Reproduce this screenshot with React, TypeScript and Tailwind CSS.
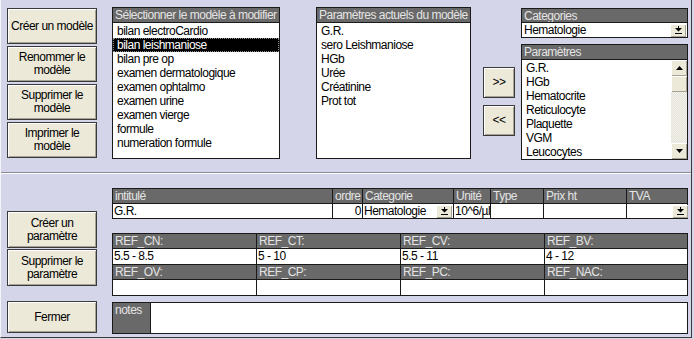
import { FC, ReactNode } from 'react';

const font = 'font-[Liberation_Sans,Arial,sans-serif] text-[12px] tracking-[-0.5px]';

const bevel = 'bg-[#ece9d8] shadow-[inset_1px_1px_0_#ffffff,inset_-1px_-1px_0_#a7a394]';

const Button: FC<{ lines: string[]; className?: string }> = ({ lines, className = '' }) => (
  <div
    className={`flex flex-col items-center justify-center border border-[#3a3a3a] ${bevel} leading-[13px] text-black ${className}`}
  >
    {lines.map((l) => (
      <span key={l} className="whitespace-nowrap">{l}</span>
    ))}
  </div>
);

const DropArrow: FC = () => (
  <div className={`flex h-[13px] w-[16px] items-center justify-center ${bevel}`}>
    <svg width="7" height="8" viewBox="0 0 7 8">
      <path d="M3 0h1v2h3L3.5 5.5 0 2h3z" fill="#000" />
      <rect x="0" y="7" width="7" height="1" fill="#000" />
    </svg>
  </div>
);

const ScrollArrow: FC<{ up?: boolean }> = ({ up }) => (
  <div className={`flex h-[16px] w-[16px] items-center justify-center ${bevel}`}>
    <svg width="7" height="4" viewBox="0 0 7 4">
      <path d={up ? 'M3.5 0L7 4H0z' : 'M0 0h7L3.5 4z'} fill="#000" />
    </svg>
  </div>
);

const Header: FC<{ children: ReactNode; className?: string }> = ({ children, className = '' }) => (
  <div className={`bg-[#696969] px-[2px] leading-[14px] text-[#e4e4e4] whitespace-nowrap overflow-hidden ${className}`}>
    {children}
  </div>
);

interface ListBoxProps {
  title: string;
  items: string[];
  selected?: number;
  className?: string;
}

const ListBox: FC<ListBoxProps> = ({ title, items, selected, className = '' }) => (
  <div className={`flex flex-col border border-[#1a1a1a] bg-white ${className}`}>
    <Header className="h-[15px] border-b border-[#1a1a1a]">{title}</Header>
    <div className="pt-[1px]">
      {items.map((it, i) => (
        <div
          key={it}
          className={`h-[14px] pl-[4px] leading-[14px] whitespace-nowrap ${
            i === selected ? 'bg-black text-white outline outline-1 outline-dotted outline-[#888] -outline-offset-1' : 'text-black'
          }`}
        >
          {it}
        </div>
      ))}
    </div>
  </div>
);

const cols1 = [
  { label: 'intitulé', w: 'w-[220px]', value: 'G.R.' },
  { label: 'ordre', w: 'w-[30px]', value: '0', right: true },
  { label: 'Categorie', w: 'w-[91px]', value: 'Hematologie', drop: true },
  { label: 'Unité', w: 'w-[37px]', value: '10^6/µl' },
  { label: 'Type', w: 'w-[53px]', value: '' },
  { label: 'Prix ht', w: 'w-[83px]', value: '' },
  { label: 'TVA', w: 'w-[62px]', value: '', drop: true },
];

const refs = [
  [
    ['REF_CN:', '5.5 - 8.5'],
    ['REF_CT:', '5 - 10'],
    ['REF_CV:', '5.5 - 11'],
    ['REF_BV:', '4 - 12'],
  ],
  [
    ['REF_OV:', ''],
    ['REF_CP:', ''],
    ['REF_PC:', ''],
    ['REF_NAC:', ''],
  ],
];

export default function App() {
  return (
    <div className={`relative h-[339px] w-[694px] overflow-hidden bg-[#d5d5ea] ${font}`}>
      <div className="h-[338px] w-[692px] border-r border-b border-l border-[#3c3c3c] border-l-[#f4f4fa]">
        {/* top: modèles */}
        <div className="flex h-[172px] pt-[7px]">
          <div className="ml-[6px] mt-[1px] flex w-[90px] flex-col gap-[2px]">
            <Button lines={['Créer un modèle']} className="h-[36px]" />
            <Button lines={['Renommer le', 'modèle']} className="h-[36px]" />
            <Button lines={['Supprimer le', 'modèle']} className="h-[36px]" />
            <Button lines={['Imprimer le', 'modèle']} className="h-[36px]" />
          </div>
          <ListBox
            className="ml-[15px] h-[152px] w-[168px]"
            title="Sélectionner le modèle à modifier"
            selected={1}
            items={[
              'bilan electroCardio',
              'bilan leishmaniose',
              'bilan pre op',
              'examen dermatologique',
              'examen ophtalmo',
              'examen urine',
              'examen vierge',
              'formule',
              'numeration formule',
            ]}
          />
          <ListBox
            className="ml-[36px] h-[152px] w-[155px]"
            title="Paramètres actuels du modèle"
            items={['G.R.', 'sero Leishmaniose', 'HGb', 'Urée', 'Créatinine', 'Prot tot']}
          />
          <div className="ml-[12px] mt-[60px] flex flex-col gap-[7px]">
            <Button lines={['>>']} className="h-[31px] w-[32px]" />
            <Button lines={['<<']} className="h-[31px] w-[32px]" />
          </div>
          <div className="ml-[6px] mt-[1px] w-[167px]">
            <div className="border border-[#1a1a1a] bg-white">
              <Header className="h-[14px] border-b border-[#1a1a1a]">Categories</Header>
              <div className="flex h-[14px] items-center justify-between pr-[1px]">
                <span className="pl-[2px] leading-[14px]">Hematologie</span>
                <DropArrow />
              </div>
            </div>
            <div className="mt-[6px] flex h-[116px] flex-col border border-[#1a1a1a] bg-white">
              <Header className="h-[15px] border-b border-[#1a1a1a]">Paramètres</Header>
              <div className="flex min-h-0 flex-1">
                <div className="flex-1 overflow-hidden pt-[1px]">
                  {['G.R.', 'HGb', 'Hematocrite', 'Reticulocyte', 'Plaquette', 'VGM', 'Leucocytes'].map((it) => (
                    <div key={it} className="h-[14px] pl-[4px] leading-[14px]">
                      {it}
                    </div>
                  ))}
                </div>
                <div className="flex w-[16px] flex-col bg-[repeating-conic-gradient(#f3f2ec_0_25%,#e4e2d8_0_50%)] bg-[length:2px_2px]">
                  <ScrollArrow up />
                  <div className={`h-[16px] w-[16px] ${bevel}`} />
                  <div className="flex-1" />
                  <ScrollArrow />
                </div>
              </div>
            </div>
          </div>
        </div>

        {/* divider */}
        <div className="h-[2px] border-t border-b border-t-[#8a8a9a] border-b-white" />

        {/* bottom: paramètres */}
        <div className="flex pt-[14px]">
          <div className="ml-[6px] flex w-[90px] flex-col">
            <Button lines={['Créer un', 'paramètre']} className="mt-[23px] h-[37px]" />
            <Button lines={['Supprimer le', 'paramètre']} className="mt-[1px] h-[37px]" />
            <Button lines={['Fermer']} className="mt-[15px] h-[32px]" />
          </div>
          <div className="ml-[15px] flex w-[576px] flex-col">
            <div className="border border-[#1a1a1a] bg-white">
              <div className="flex h-[15px] border-b border-[#1a1a1a] bg-[#696969]">
                {cols1.map((c, i) => (
                  <div
                    key={c.label}
                    className={`${c.w} shrink-0 overflow-hidden whitespace-nowrap px-[2px] leading-[14px] text-[#e4e4e4] ${
                      i < cols1.length - 1 ? 'border-r border-[#1a1a1a]' : ''
                    }`}
                  >
                    {c.label}
                  </div>
                ))}
              </div>
              <div className="flex h-[14px]">
                {cols1.map((c, i) => (
                  <div
                    key={c.label}
                    className={`${c.w} flex shrink-0 items-center justify-between overflow-hidden whitespace-nowrap leading-[14px] ${
                      i < cols1.length - 1 ? 'border-r border-[#1a1a1a]' : ''
                    }`}
                  >
                    <span className={`px-[1px] ${c.right ? 'ml-auto' : ''}`}>{c.value}</span>
                    {c.drop && (
                      <div className="mr-[1px]">
                        <DropArrow />
                      </div>
                    )}
                  </div>
                ))}
              </div>
            </div>

            <div className="mt-[14px] border border-[#1a1a1a] bg-white">
              {refs.map((row, r) => (
                <div key={r} className={r > 0 ? 'border-t border-[#1a1a1a]' : ''}>
                  <div className="flex h-[15px] border-b border-[#1a1a1a] bg-[#696969]">
                    {row.map(([label], i) => (
                      <div
                        key={label}
                        className={`w-[144px] shrink-0 px-[2px] leading-[14px] text-[#e4e4e4] ${
                          i < 3 ? 'border-r border-[#1a1a1a]' : ''
                        }`}
                      >
                        {label}
                      </div>
                    ))}
                  </div>
                  <div className="flex h-[15px]">
                    {row.map(([label, value], i) => (
                      <div
                        key={label}
                        className={`w-[144px] shrink-0 px-[1px] leading-[15px] ${i < 3 ? 'border-r border-[#1a1a1a]' : ''}`}
                      >
                        {value}
                      </div>
                    ))}
                  </div>
                </div>
              ))}
            </div>

            <div className="mt-[6px] flex h-[32px] border border-[#1a1a1a] bg-white">
              <div className="w-[38px] border-r border-[#1a1a1a] bg-[#696969] px-[2px] leading-[14px] text-[#e4e4e4]">
                notes
              </div>
              <div className="flex-1" />
            </div>
          </div>
        </div>
      </div>
    </div>
  );
}
